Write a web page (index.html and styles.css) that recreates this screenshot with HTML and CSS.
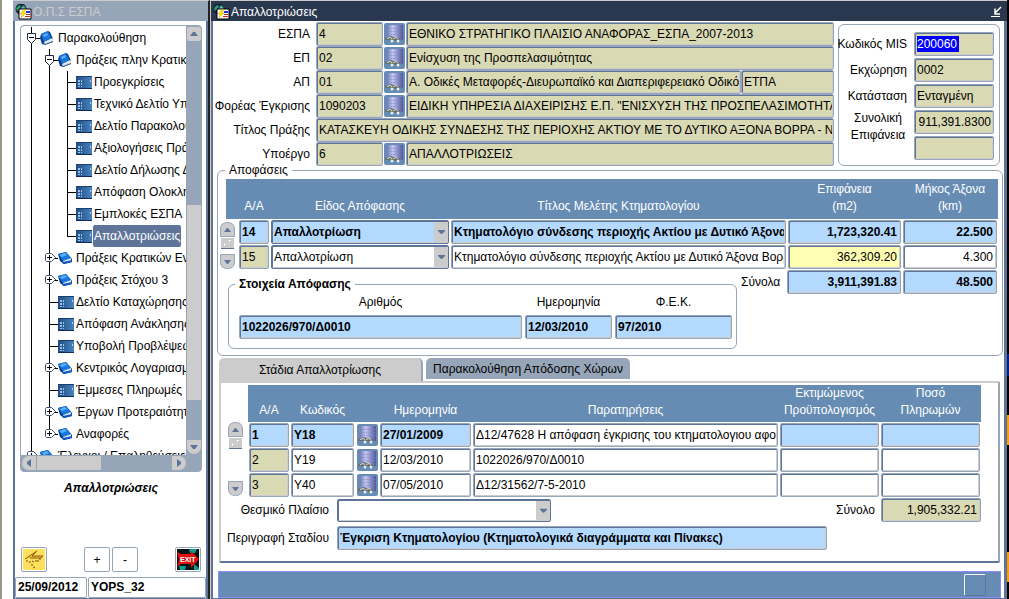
FILE: index.html
```html
<!DOCTYPE html>
<html lang="el">
<head>
<meta charset="utf-8">
<title>Απαλλοτριώσεις</title>
<link rel="stylesheet" href="styles.css">
</head>
<body>
<svg class="defs" aria-hidden="true">
  <linearGradient id="g-form" x1="0" x2="1"><stop offset="0" stop-color="#1f4c86"/><stop offset="1" stop-color="#4a83bb"/></linearGradient>
  <linearGradient id="g-db" x1="0" x2="1"><stop offset="0" stop-color="#7478b8"/><stop offset=".35" stop-color="#c3c7f0"/><stop offset="1" stop-color="#50559c"/></linearGradient>
  <symbol id="i-book-open" viewBox="0 0 14 14">
    <path d="M1 3 8 0l2 1 3 7v3l-8 3-3-1-2-6z" fill="#0b3c86"/>
    <path d="M1 3 8 0l3 7-7 4z" fill="#1878e0"/>
    <path d="M3 4l4-2 1 2-4 2z" fill="#5fb0ff"/>
    <path d="M4 11l8-4 1 1v3l-8 3z" fill="#dfe8f2"/>
    <path d="M5 13l8-3v1l-8 3z" fill="#31557f"/>
  </symbol>
  <symbol id="i-book" viewBox="0 0 14 14">
    <path d="M0 3 8 1l6 7v3l-8 2-4-3z" fill="#0b3c86"/>
    <path d="M0 3 8 1l5 6-8 3z" fill="#1878e0"/>
    <path d="M2 4l5-2 2 2-5 2z" fill="#5fb0ff"/>
    <path d="M5 10l8-3v3l-7 2z" fill="#dfe8f2"/>
    <path d="M5 11l9-2v2l-8 2-2-1z" fill="#0b58c0"/>
  </symbol>
  <symbol id="i-form" viewBox="0 0 16 13">
    <path d="M0 0h16v13H0z" fill="url(#g-form)"/>
    <path d="M0 0h16v1H0z" fill="#1c3f70"/><path d="M0 12h16v1H0z" fill="#0d2a58"/>
    <path d="M2 4h2v2H2zM5 4h1v2H5zM2 7h2v2H2zM5 7h1v2H5zM2 10h2v1H2zM5 10h1v1H5z" fill="#9fc0e0"/>
    <path d="M8 3h5v1H8zM12 7h1v3h-1z" fill="#3d78b4"/><path d="M14 4h1v2h-1z" fill="#a5cdf2"/>
  </symbol>
  <symbol id="i-minus" viewBox="0 0 9 14">
    <path d="M.5 2.500h8v6l-4 4-4-4z" fill="#fff" stroke="#222c3c"/><path d="M2 6h5v1H2z" fill="#000"/>
  </symbol>
  <symbol id="i-plus" viewBox="0 0 12 10">
    <path d="M1.500.5h5l4 4-4 4h-5l-1-1v-6z" fill="#fff" stroke="#3c4f6e"/><path d="M2 4h5v1H2zM4 2h1v5H4z" fill="#000"/>
  </symbol>
  <symbol id="i-app" viewBox="0 0 17 16">
    <circle cx="6" cy="5" r="5.500" fill="#111b33"/><path d="M1 4l3-3 2 1-1 3-3 2zM7 1l3 1 1 3-2 1z" fill="#2f9c66"/><path d="M6 4l2-2 2 3-3 2z" fill="#87a8dc"/>
    <path d="M4 5h12v10H4z" fill="#fff" stroke="#000"/>
    <path d="M9 5.500 5 10h2l-1 4 5-5H9l2-3.500z" fill="#ffe600" stroke="#a67c00" stroke-width=".3"/>
    <path d="M11 7h4v2h-4z" fill="#2230c8"/><path d="M11 10h4v1h-4zM10 12h5v1h-5z" fill="#e02020"/>
  </symbol>
  <symbol id="i-db" viewBox="0 0 19 19">
    <path d="M0 0h19v19H0z" fill="#668cb3"/>
    <path d="M2 0h16v15H2z" fill="url(#g-db)"/>
    <path d="M2 3.500h16M2 6.500h16M2 9.500h16" fill="none" stroke="#8085c2" stroke-opacity=".4"/>
    <path d="M0 15q0-3 3-3l3-1 3 1 2 0 3 1q2 1 1 3l-3 1-3-2-3 1-3-1z" fill="#6a6f70"/>
    <path d="M2 13.500l3-1 2 1M8 13.500l3-1 2 1" stroke="#deded2" fill="none"/>
    <circle cx="7" cy="16" r="1.500" fill="#e2f0f8"/><circle cx="13" cy="16" r="1.500" fill="#e2f0f8"/>
  </symbol>
  <symbol id="i-up" viewBox="0 0 15 15"><path d="M.5 14.500V7q0-6.500 7-6.500t7 6.500v7.500z" fill="#ccc" stroke="#97a5b9"/><path d="M7 6h1l3 4H4z" fill="#5e7599"/></symbol>
  <symbol id="i-down" viewBox="0 0 15 15"><path d="M.5.5V8q0 6.500 7 6.500t7-6.500V.5z" fill="#ccc" stroke="#97a5b9"/><path d="M7 10h1l3-4H4z" fill="#5e7599"/></symbol>
  <symbol id="i-dots" viewBox="0 0 13 11"><path d="M0 0h13v11H0z" fill="#ccc"/><path d="M0 10h13v1H0z" fill="#5e7599"/><path d="M3 6h2v2H3zM8 2h2v2H8z" fill="#fff"/><path d="M4 7h1v1H4zM9 3h1v1H9z" fill="#97a5b9"/></symbol>
</svg>

<aside class="window nav-window">
  <h2 class="title-bar inactive"><svg class="app-icon"><use href="#i-app"/></svg>Ο.Π.Σ ΕΣΠΑ</h2>
  <div class="nav-body">
    <nav class="tree-box">
      <div class="tree-view">
        <ul class="tree">
          <li><div class="node"><svg class="minus"><use href="#i-minus"/></svg><svg class="book"><use href="#i-book-open"/></svg><a href="#">Παρακολούθηση</a></div>
            <ul>
              <li><div class="node"><svg class="minus"><use href="#i-minus"/></svg><svg class="book"><use href="#i-book-open"/></svg><a href="#">Πράξεις πλην Κρατικών</a></div>
                <ul>
                  <li><div class="node"><svg class="form"><use href="#i-form"/></svg><a href="#">Προεγκρίσεις</a></div></li>
                  <li><div class="node"><svg class="form"><use href="#i-form"/></svg><a href="#">Τεχνικό Δελτίο Υποέργου</a></div></li>
                  <li><div class="node"><svg class="form"><use href="#i-form"/></svg><a href="#">Δελτίο Παρακολούθησης</a></div></li>
                  <li><div class="node"><svg class="form"><use href="#i-form"/></svg><a href="#">Αξιολογήσεις Πράξεων</a></div></li>
                  <li><div class="node"><svg class="form"><use href="#i-form"/></svg><a href="#">Δελτίο Δήλωσης Δαπανών</a></div></li>
                  <li><div class="node"><svg class="form"><use href="#i-form"/></svg><a href="#">Απόφαση Ολοκλήρωσης</a></div></li>
                  <li><div class="node"><svg class="form"><use href="#i-form"/></svg><a href="#">Εμπλοκές ΕΣΠΑ</a></div></li>
                  <li><div class="node"><svg class="form"><use href="#i-form"/></svg><a href="#" class="selected">Απαλλοτριώσεις</a></div></li>
                </ul>
              </li>
              <li><div class="node"><svg class="plus"><use href="#i-plus"/></svg><svg class="book"><use href="#i-book"/></svg><a href="#">Πράξεις Κρατικών Ενισχύσεων</a></div></li>
              <li><div class="node"><svg class="plus"><use href="#i-plus"/></svg><svg class="book"><use href="#i-book"/></svg><a href="#">Πράξεις Στόχου 3</a></div></li>
              <li><div class="node"><svg class="form"><use href="#i-form"/></svg><a href="#">Δελτίο Καταχώρησης</a></div></li>
              <li><div class="node"><svg class="form"><use href="#i-form"/></svg><a href="#">Απόφαση Ανάκλησης</a></div></li>
              <li><div class="node"><svg class="form"><use href="#i-form"/></svg><a href="#">Υποβολή Προβλέψεων</a></div></li>
              <li><div class="node"><svg class="plus"><use href="#i-plus"/></svg><svg class="book"><use href="#i-book"/></svg><a href="#">Κεντρικός Λογαριασμός</a></div></li>
              <li><div class="node"><svg class="form"><use href="#i-form"/></svg><a href="#">Έμμεσες Πληρωμές</a></div></li>
              <li><div class="node"><svg class="plus"><use href="#i-plus"/></svg><svg class="book"><use href="#i-book"/></svg><a href="#">Έργων Προτεραιότητας</a></div></li>
              <li><div class="node"><svg class="plus"><use href="#i-plus"/></svg><svg class="book"><use href="#i-book"/></svg><a href="#">Αναφορές</a></div></li>
            </ul>
          </li>
          <li><div class="node"><svg class="plus"><use href="#i-plus"/></svg><svg class="book"><use href="#i-book"/></svg><a href="#">Έλεγχοι / Επαληθεύσεις</a></div></li>
        </ul>
      </div>
      <div class="vbar">
        <button aria-label="Πάνω"><svg viewBox="0 0 14 14"><path d="M6 5h2l3 4H3z" fill="#5e7599"/></svg></button>
        <span class="vthumb"></span>
        <button aria-label="Κάτω" class="round-b"><svg viewBox="0 0 14 14"><path d="M6 9h2l3-4H3z" fill="#5e7599"/></svg></button>
      </div>
      <div class="hbar">
        <button aria-label="Αριστερά" class="round-l"><svg viewBox="0 0 14 14"><path d="M9 3v8L5 8V6z" fill="#5e7599"/></svg></button>
        <span class="hthumb"></span>
        <button aria-label="Δεξιά" class="round-r"><svg viewBox="0 0 14 14"><path d="M5 3v8l4-3V6z" fill="#5e7599"/></svg></button>
      </div>
    </nav>
    <p class="current">Απαλλοτριώσεις</p>
    <div class="tools">
      <button class="tool" aria-label="Εκτέλεση"><svg viewBox="0 0 22 21"><path d="M0 0h22v21H0z" fill="#ffe05c"/><path d="M2 10 14 2 9 7h11l-2 2H7" fill="#f7c33c" stroke="#8a5a10"/><path d="M3 12h2M6 13h2M9 12l2 1M12 12h4M17 9v2M8 16h2M10 19l2-1" stroke="#7a5210"/></svg></button>
      <button class="tool zoom-in">+</button>
      <button class="tool">-</button>
      <button class="tool exit" aria-label="Έξοδος"><svg viewBox="0 0 22 21"><path d="M0 0h22v21H0z" fill="#071414"/><path d="M12 0h8l-2 4h-5zM2 17h7l-1 4H3zM17 15l5 4v2h-5z" fill="#0c9c90"/><path d="M0 3l4 2h10V2l8 8-8 9v-4H4l-4 3 2-7z" fill="#e01010"/><text x="3" y="13" font-size="7" fill="#fff">EXIT</text></svg></button>
    </div>
    <div class="session">
      <input aria-label="Ημερομηνία συστήματος" value="25/09/2012" class="date">
      <input aria-label="Χρήστης" value="YOPS_32">
    </div>
  </div>
</aside>

<main class="window main-window">
  <h1 class="title-bar"><svg class="app-icon"><use href="#i-app"/></svg>Απαλλοτριώσεις
    <button class="restore" aria-label="Ελαχιστοποίηση"><svg viewBox="0 0 12 12"><path d="M10 1 4 7M4 2.500V8h5" fill="none" stroke="#fff" stroke-width="1.500"/><path d="M0 10h9v1H0z" fill="#fff"/></svg></button>
  </h1>
  <div class="main-body">
    <section class="summary">
      <div class="identity">
        <label for="espa">ΕΣΠΑ</label><input id="espa" value="4"><button class="lov" aria-label="Λίστα ΕΣΠΑ"><svg><use href="#i-db"/></svg></button><input aria-label="Τίτλος ΕΣΠΑ" value="ΕΘΝΙΚΟ ΣΤΡΑΤΗΓΙΚΟ ΠΛΑΙΣΙΟ ΑΝΑΦΟΡΑΣ_ΕΣΠΑ_2007-2013">
        <label for="ep">ΕΠ</label><input id="ep" value="02"><button class="lov" aria-label="Λίστα ΕΠ"><svg><use href="#i-db"/></svg></button><input aria-label="Τίτλος ΕΠ" value="Ενίσχυση της Προσπελασιμότητας">
        <label for="ap">ΑΠ</label><input id="ap" value="01"><button class="lov" aria-label="Λίστα ΑΠ"><svg><use href="#i-db"/></svg></button><div class="pair"><input aria-label="Τίτλος ΑΠ" value="Α. Οδικές Μεταφορές-Διευρωπαϊκό και Διαπεριφερειακό Οδικό Δίκτυο"><input aria-label="Ταμείο" class="fund" value="ΕΤΠΑ"></div>
        <label for="body">Φορέας Έγκρισης</label><input id="body" value="1090203"><button class="lov" aria-label="Λίστα φορέων"><svg><use href="#i-db"/></svg></button><input aria-label="Τίτλος φορέα" value="ΕΙΔΙΚΗ ΥΠΗΡΕΣΙΑ ΔΙΑΧΕΙΡΙΣΗΣ Ε.Π. &quot;ΕΝΙΣΧΥΣΗ ΤΗΣ ΠΡΟΣΠΕΛΑΣΙΜΟΤΗΤΑΣ&quot;">
        <label for="act">Τίτλος Πράξης</label><input id="act" class="wide" value="ΚΑΤΑΣΚΕΥΗ ΟΔΙΚΗΣ ΣΥΝΔΕΣΗΣ ΤΗΣ ΠΕΡΙΟΧΗΣ ΑΚΤΙΟΥ ΜΕ ΤΟ ΔΥΤΙΚΟ ΑΞΟΝΑ ΒΟΡΡΑ - ΝΟΤΟΥ">
        <label for="sub">Υποέργο</label><input id="sub" value="6"><button class="lov" aria-label="Λίστα υποέργων"><svg><use href="#i-db"/></svg></button><input aria-label="Τίτλος υποέργου" value="ΑΠΑΛΛΟΤΡΙΩΣΕΙΣ">
      </div>
      <div class="mis">
        <label for="mis">Κωδικός MIS</label><input id="mis" class="highlighted" value="200060">
        <label for="ekx">Εκχώρηση</label><input id="ekx" value="0002">
        <label for="kat">Κατάσταση</label><input id="kat" value="Ενταγμένη">
        <label for="area" class="tall">Συνολική Επιφάνεια</label><input id="area" class="num" value="911,391.8300">
        <input aria-label="Πρόσθετο πεδίο">
      </div>
    </section>

    <fieldset class="decisions">
      <legend>Αποφάσεις</legend>
      <table>
        <colgroup><col class="c12"><col class="c32"><col class="c180"><col><col class="c115"><col class="c96"></colgroup>
        <thead><tr><th></th><th>Α/Α</th><th>Είδος Απόφασης</th><th>Τίτλος Μελέτης Κτηματολογίου</th><th>Επιφάνεια<br>(m2)</th><th>Μήκος Άξονα<br>(km)</th></tr></thead>
        <tbody>
          <tr class="current-row">
            <td rowspan="2" class="scroll-cell"><div class="scroller"><button aria-label="Προηγούμενη"><svg><use href="#i-up"/></svg></button><svg class="dots"><use href="#i-dots"/></svg><button aria-label="Επόμενη" class="next"><svg><use href="#i-down"/></svg></button></div></td>
            <td><input aria-label="Α/Α" value="14"></td><td><select aria-label="Είδος Απόφασης"><option>Απαλλοτρίωση</option></select></td><td><input aria-label="Τίτλος Μελέτης" value="Κτηματολόγιο σύνδεσης περιοχής Ακτίου με Δυτικό Άξονα Βορρά"></td><td><input aria-label="Επιφάνεια" class="num" value="1,723,320.41"></td><td><input aria-label="Μήκος" class="num" value="22.500"></td>
          </tr>
          <tr>
            <td><input aria-label="Α/Α" class="locked" value="15"></td><td><select aria-label="Είδος Απόφασης"><option>Απαλλοτρίωση</option></select></td><td><input aria-label="Τίτλος Μελέτης" value="Κτηματολόγιο σύνδεσης περιοχής Ακτίου με Δυτικό Άξονα Βορρά"></td><td><input aria-label="Επιφάνεια" class="num warn" value="362,309.20"></td><td><input aria-label="Μήκος" class="num" value="4.300"></td>
          </tr>
        </tbody>
      </table>
      <div class="decision-foot">
        <fieldset class="details">
          <legend>Στοιχεία Απόφασης</legend>
          <div class="detail-grid current-row">
            <label for="no">Αριθμός</label><label for="dt">Ημερομηνία</label><label for="fek">Φ.Ε.Κ.</label>
            <input id="no" value="1022026/970/Δ0010"><input id="dt" value="12/03/2010"><input id="fek" value="97/2010">
          </div>
        </fieldset>
        <div class="totals current-row"><label for="t1">Σύνολα</label><input id="t1" class="num" value="3,911,391.83"><input aria-label="Σύνολο μήκους" class="num" value="48.500"></div>
      </div>
    </fieldset>

    <div class="tabs" role="tablist">
      <button role="tab" aria-selected="true" class="tab active">Στάδια Απαλλοτρίωσης</button>
      <button role="tab" aria-selected="false" class="tab">Παρακολούθηση Απόδοσης Χώρων</button>
    </div>
    <section class="stages">
      <div class="stage-list">
        <div class="scroller"><button aria-label="Προηγούμενο"><svg><use href="#i-up"/></svg></button><svg class="dots"><use href="#i-dots"/></svg><button aria-label="Επόμενο" class="next"><svg><use href="#i-down"/></svg></button></div>
        <table>
          <colgroup><col class="c42"><col class="c65"><col class="c24"><col class="c93"><col><col class="c101"><col class="c101"></colgroup>
          <thead><tr><th>Α/Α</th><th>Κωδικός</th><th></th><th>Ημερομηνία</th><th>Παρατηρήσεις</th><th>Εκτιμώμενος<br>Προϋπολογισμός</th><th>Ποσό<br>Πληρωμών</th></tr></thead>
          <tbody>
            <tr class="current-row"><td><input aria-label="Α/Α" value="1"></td><td><input aria-label="Κωδικός" value="Υ18"></td><td><button class="lov" aria-label="Λίστα σταδίων"><svg><use href="#i-db"/></svg></button></td><td><input aria-label="Ημερομηνία" value="27/01/2009"></td><td><input aria-label="Παρατηρήσεις" class="plain" value="Δ12/47628 Η απόφαση έγκρισης του κτηματολογιου αφορά"></td><td><input aria-label="Προϋπολογισμός"></td><td><input aria-label="Πληρωμές"></td></tr>
            <tr><td><input aria-label="Α/Α" class="locked" value="2"></td><td><input aria-label="Κωδικός" value="Υ19"></td><td><button class="lov" aria-label="Λίστα σταδίων"><svg><use href="#i-db"/></svg></button></td><td><input aria-label="Ημερομηνία" value="12/03/2010"></td><td><input aria-label="Παρατηρήσεις" value="1022026/970/Δ0010"></td><td><input aria-label="Προϋπολογισμός"></td><td><input aria-label="Πληρωμές"></td></tr>
            <tr><td><input aria-label="Α/Α" class="locked" value="3"></td><td><input aria-label="Κωδικός" value="Υ40"></td><td><button class="lov" aria-label="Λίστα σταδίων"><svg><use href="#i-db"/></svg></button></td><td><input aria-label="Ημερομηνία" value="07/05/2010"></td><td><input aria-label="Παρατηρήσεις" value="Δ12/31562/7-5-2010"></td><td><input aria-label="Προϋπολογισμός"></td><td><input aria-label="Πληρωμές"></td></tr>
          </tbody>
        </table>
      </div>
      <div class="stage-lines">
        <div class="stage-line"><label for="law">Θεσμικό Πλαίσιο</label><select id="law"><option></option></select><label for="sum" class="sum-label">Σύνολο</label><input id="sum" class="num locked" value="1,905,332.21"></div>
        <div class="stage-line current-row"><label for="desc">Περιγραφή Σταδίου</label><input id="desc" value="Έγκριση Κτηματολογίου (Κτηματολογικά διαγράμματα και Πίνακες)"></div>
      </div>
    </section>
    <footer class="status"><span></span></footer>
  </div>
</main>
<div class="desktop-edge"></div>
</body>
</html>
```
FILE: styles.css
```css
* { box-sizing: border-box; }
:root {
  --steel: #5e7599;
  --mist: #97a5b9;
  --grey: #ccc;
  --khaki: #d9d9b3;
  --sky: #b3d9ff;
  --head: #668cb3;
}
body {
  margin: 0;
  height: 100vh;
  min-height: 599px;
  display: flex;
  background: #fff;
  border-left: 2px solid #9a968a;
  padding-left: 11px;
  color: #000;
  font: 12px/16px "Liberation Sans", Arial, sans-serif;
}
.defs { position: absolute; width: 0; height: 0; }
input, select, button { font: inherit; color: inherit; margin: 0; }
button { padding: 0; border: 0; background: none; }
svg { display: block; flex: none; }
p, ul { margin: 0; padding: 0; list-style: none; }
label { white-space: nowrap; }

input, select {
  width: 100%;
  min-width: 0;
  height: 24px;
  padding: 0 1px 1px 2px;
  border: 1px solid var(--mist);
  border-radius: 2px;
  background-color: #fff;
  box-shadow: inset 1px 1px var(--steel), inset -1px -1px var(--grey);
  outline: none;
}
select {
  display: block;
  appearance: none;
  padding-right: 18px;
  border-color: var(--steel);
  background-image: url("data:image/svg+xml,%3Csvg xmlns='http://www.w3.org/2000/svg' width='14' height='22'%3E%3Cpath d='M0 0h14v22H0z' fill='%23ccc'/%3E%3Cpath d='M4 9h7v1L8 13H7L4 10z' fill='%235e7599'/%3E%3C/svg%3E");
  background-repeat: no-repeat;
  background-position: right center;
}
.num { text-align: right; padding-right: 3px; }
.current-row input, .current-row select { background-color: var(--sky); font-weight: bold; }
.current-row input.plain { background-color: #fff; font-weight: normal; }
input.locked { background-color: var(--khaki); }
input.warn { background-color: #ffffb3; }

/* Windows */
.window { display: flex; flex-direction: column; border-top: 1px solid var(--grey); }
.title-bar {
  display: flex;
  align-items: center;
  gap: 1px;
  height: 20px;
  margin: 0;
  padding: 2px 4px 0 2px;
  background: #29384f;
  color: #fff;
  font-size: 12px;
  font-weight: normal;
}
.title-bar.inactive { background: var(--mist); color: var(--grey); }
.app-icon { width: 17px; height: 16px; }
.restore { margin-left: auto; }
.restore svg { width: 12px; height: 12px; }
.nav-window { width: 197px; flex: none; border-right: 2px solid #222; }
.nav-body {
  flex: 1;
  min-height: 0;
  display: flex;
  flex-direction: column;
  padding: 4px 4px 0 5px;
  border: solid var(--steel);
  border-width: 0 2px 1px;
}

/* Tree */
.tree-box {
  flex: 1;
  min-height: 0;
  display: grid;
  grid-template: minmax(0, 1fr) 16px / minmax(0, 1fr) 15px;
  border: 1px solid var(--mist);
  border-radius: 4px;
  background: var(--mist);
  overflow: hidden;
}
.tree-view { overflow: hidden; padding: 1px 0 0 6px; background: #fff; border-top-left-radius: 3px; }
.tree li { position: relative; }
.tree li::before {
  content: "";
  position: absolute;
  left: 4px;
  top: 0;
  bottom: 0;
  border-left: 1px solid #000;
}
.tree ul li:last-child::before { bottom: auto; height: 11px; }
.tree ul { margin-left: 18px; }
.node {
  position: relative;
  display: flex;
  align-items: center;
  height: 22px;
  padding-left: 13px;
  white-space: nowrap;
}
.node::before { content: ""; position: absolute; left: 4px; top: 11px; width: 9px; border-top: 1px solid #000; }
.node a { color: #000; text-decoration: none; padding: 0 1px; line-height: 22px; margin-left: -1px; }
.node a.selected { background: var(--steel); color: #fff; border-radius: 2px; }
.minus { position: absolute; left: 0; width: 9px; height: 14px; }
.plus { position: absolute; left: 0; width: 12px; height: 10px; }
.book { width: 14px; height: 14px; margin-right: 4px; position: relative; }
.form { width: 16px; height: 13px; margin-right: 2px; position: relative; }
.vbar { display: flex; flex-direction: column; align-items: center; padding: 1px 0; }
.vbar button, .hbar button { width: 14px; height: 14px; background: var(--grey); flex: none; border-radius: 2px; }
.vbar button.round-b { border-radius: 0 0 7px 7px; }
.vthumb { width: 14px; background: var(--grey); flex: 194; margin-top: 164px; margin-bottom: 40px; }
.hbar { display: flex; align-items: center; gap: 1px; padding: 0 0 0 1px; }
.hbar button.round-l { border-radius: 7px 0 0 7px; }
.hbar button.round-r { border-radius: 0 7px 7px 0; margin-left: auto; }
.hthumb { width: 64px; height: 14px; background: var(--grey); }
.current { margin-top: 8px; text-align: center; font-weight: bold; font-style: italic; }
.tools { display: flex; gap: 2px; margin: 51px 1px 0; }
.tool { width: 26px; height: 25px; padding: 1px; border: 1px solid var(--mist); border-radius: 2px; background: #fff; }
.tool svg { width: 22px; height: 21px; }
.tool.zoom-in { margin-left: auto; }
.tool.exit { margin-left: auto; }
.exit text { font-weight: bold; font-family: "Liberation Sans", Arial, sans-serif; }
.session { display: flex; gap: 1px; margin: 5px -4px 0 -5px; }
.session input { height: 21px; font-weight: bold; box-shadow: none; }
.session .date { width: 72px; flex: none; }

/* Main window */
.main-window { flex: 1; min-width: 0; border-left: 1px solid var(--grey); }
.main-body {
  flex: 1;
  padding: 1px 1px 0 0;
  border: solid var(--steel);
  border-width: 0 3px 1px 2px;
}
.summary { display: flex; gap: 4px; margin-right: 3px; }
.identity {
  flex: 1;
  display: grid;
  grid-template-columns: 103px 67px 23px minmax(0, 1fr);
  grid-auto-rows: 24px;
  align-items: center;
}
.identity label { text-align: right; padding-right: 6px; }
.summary input { background-color: var(--khaki); }
.identity .wide { grid-column: 2 / -1; }
.pair { display: flex; }
.pair .fund { width: 93px; flex: none; }
.lov { display: block; width: 21px; height: 22px; padding: 1px; margin: 0 1px; background: var(--head); border-radius: 2px; }
.lov svg { width: 19px; height: 19px; }
.mis {
  width: 162px;
  display: grid;
  grid-template-columns: minmax(0, 1fr) 80px;
  align-content: start;
  gap: 2px 7px;
  margin-top: 2px;
  padding: 7px 5px 5px 0;
  border: 1px solid var(--mist);
  border-radius: 6px;
}
.mis label { justify-self: end; align-self: center; }
.mis .tall { white-space: normal; text-align: center; width: 58px; grid-row: span 2; align-self: start; line-height: 17px; }
.mis .num { padding: 0 2px 1px 1px; }
.mis .highlighted {
  color: #fff;
  background-image: linear-gradient(#00f, #00f);
  background-size: 42px 16px;
  background-position: 2px 3px;
  background-repeat: no-repeat;
}

fieldset { margin: 0; min-width: 0; border: 1px solid var(--mist); border-radius: 6px; }
legend { padding: 0 4px; line-height: 8px; }
.decisions { margin: 0 0 0 4px; padding: 5px 4px 6px 8px; }
.decisions > legend { margin-left: -1px; }
table { width: 100%; table-layout: fixed; border-collapse: collapse; }
th { height: 40px; padding: 0 0 4px; background: var(--head); color: #fff; font-weight: normal; line-height: 17px; vertical-align: bottom; white-space: nowrap; }
td { padding: 1px 1px 0; }
td input { display: block; }
.c12 { width: 12px; } .c24 { width: 24px; } .c32 { width: 32px; } .c42 { width: 42px; }
.c65 { width: 65px; } .c93 { width: 93px; } .c96 { width: 96px; } .c101 { width: 101px; }
.c115 { width: 115px; } .c180 { width: 180px; }
.scroll-cell { vertical-align: top; }
.scroller { display: flex; flex-direction: column; align-items: center; width: 15px; height: 47px; }
.scroller button, .scroller button svg { width: 15px; height: 15px; }
.scroller .dots { width: 13px; height: 11px; margin-top: 1px; }
.scroller .next { margin-top: auto; }
.scroll-cell .scroller { margin: 2px 0 0 -7px; }
.decision-foot { display: flex; align-items: flex-start; gap: 4px; }
.details { flex: 1; margin: 11px 0 0 2px; padding: 5px 4px 9px 10px; }
.details > legend { font-weight: bold; margin-left: -4px; }
.detail-grid { display: grid; grid-template-columns: minmax(0, 1fr) 87px 117px; gap: 4px 3px; }
.detail-grid label { text-align: center; line-height: 18px; }
.totals { display: grid; grid-template-columns: 44px 114px 94px; gap: 2px; align-items: center; margin: 1px 1px 0 0; }

/* Stages */
.tabs { display: flex; gap: 3px; margin: 2px 0 0 6px; }
.tab { height: 23px; width: 204px; background: var(--mist); border-radius: 5px 5px 0 0; }
.tab:not(.active) { height: 21px; }
.tab.active { background: var(--grey); border-right: 2px solid var(--mist); }
.stages {
  margin: 0 3px 0 6px;
  padding: 2px 17px 11px 0;
  border: 2px solid var(--grey);
  border-right-color: var(--mist);
  border-bottom-color: var(--steel);
  border-radius: 2px;
}
.stage-list { display: flex; align-items: flex-start; padding-left: 7px; }
.stage-list .scroller { margin: 37px 5px 0 0; height: 74px; flex: none; }
.stage-list th { height: 36px; padding-bottom: 3px; }
.stage-lines { display: grid; gap: 4px; padding-top: 1px; }
.stage-line { display: flex; align-items: center; }
.stage-line label { width: 116px; padding-right: 8px; text-align: right; flex: none; }
.stage-line select { width: 214px; height: 23px; }
.stage-line .sum-label { margin-left: auto; width: auto; padding-right: 6px; }
.stage-line #sum { width: 100px; flex: none; }
.stage-line #desc { width: 490px; }
.status {
  display: flex;
  justify-content: flex-end;
  align-items: center;
  height: 27px;
  margin: 8px 2px 0 5px;
  padding-right: 14px;
  border: 1px solid #8c8cff;
  background: var(--head);
}
.status span { width: 22px; height: 22px; border: 1px solid #fff; border-right-color: var(--steel); border-bottom-color: var(--steel); border-radius: 2px; }
.desktop-edge {
  width: 2px;
  flex: none;
  background: linear-gradient(#000 0 354px, #00218c 354px 376px, #000 376px 415px, #ff9c00 415px 445px, #000 445px 552px, #ff9c00 552px 582px, #000 582px);
}
```
